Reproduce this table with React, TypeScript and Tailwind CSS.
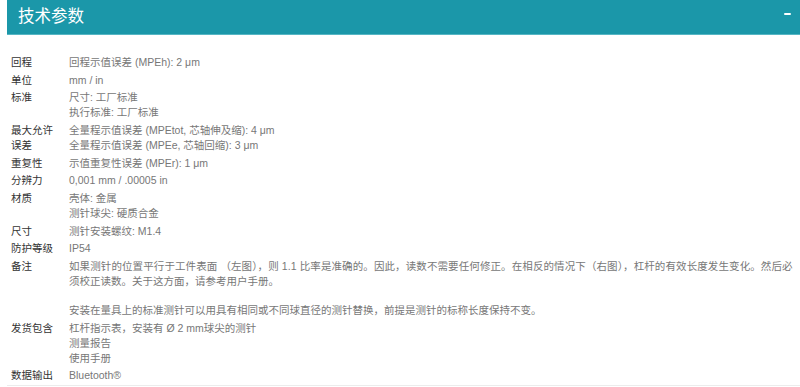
import React from "react";

const rows: { label: string; lines: string[] }[] = [
  { label: "回程", lines: ["回程示值误差 (MPEh): 2 μm"] },
  { label: "单位", lines: ["mm / in"] },
  { label: "标准", lines: ["尺寸: 工厂标准", "执行标准: 工厂标准"] },
  { label: "最大允许误差", lines: ["全量程示值误差 (MPEtot, 芯轴伸及缩): 4 μm", "全量程示值误差 (MPEe, 芯轴回缩): 3 μm"] },
  { label: "重复性", lines: ["示值重复性误差 (MPEr): 1 μm"] },
  { label: "分辨力", lines: ["0,001 mm / .00005 in"] },
  { label: "材质", lines: ["壳体: 金属", "测针球尖: 硬质合金"] },
  { label: "尺寸", lines: ["测针安装螺纹: M1.4"] },
  { label: "防护等级", lines: ["IP54"] },
  {
    label: "备注",
    lines: [
      "如果测针的位置平行于工件表面 （左图），则 1.1 比率是准确的。因此，读数不需要任何修正。在相反的情况下（右图），杠杆的有效长度发生变化。然后必",
      "须校正读数。关于这方面，请参考用户手册。",
      "",
      "安装在量具上的标准测针可以用具有相同或不同球直径的测针替换，前提是测针的标称长度保持不变。",
    ],
  },
  { label: "发货包含", lines: ["杠杆指示表，安装有 Ø 2 mm球尖的测针", "测量报告", "使用手册"] },
  { label: "数据输出", lines: ["Bluetooth®"] },
];

export default function App() {
  return (
    <div
      className="w-[800px] h-[387px] overflow-hidden bg-white"
      style={{ fontFamily: '"Liberation Sans", Arial, "Noto Sans CJK SC", sans-serif' }}
    >
      <div className="ml-[7px]">
        <div className="h-[35px] bg-[#1b97a9] border-b border-[#56b6c4] flex justify-between items-start">
          <div className="pl-[11px] text-white text-[16.5px] leading-[33px]">技术参数</div>
          <div className="mt-[13px] mr-[9px] w-[7px] h-[2px] bg-white rounded-[1px]" />
        </div>
        <div className="pt-[18.5px] border-b border-[#ececec] text-[10.5px] leading-[15px]">
          {rows.map((r) => (
            <div key={r.label} className="flex py-[1.35px]">
              <div className="w-[44px] shrink-0 pl-[4px] box-content text-[#333]">{r.label}</div>
              <div className="ml-[14px] w-[730px] text-[#777]">
                {r.lines.map((l, i) => (
                  <div
                    key={i}
                    className={
                      l === ""
                        ? "h-[14px]"
                        : l.length > 60
                        ? "whitespace-nowrap tracking-[0.1px]"
                        : "whitespace-nowrap"
                    }
                  >
                    {l}
                  </div>
                ))}
              </div>
            </div>
          ))}
        </div>
      </div>
    </div>
  );
}
